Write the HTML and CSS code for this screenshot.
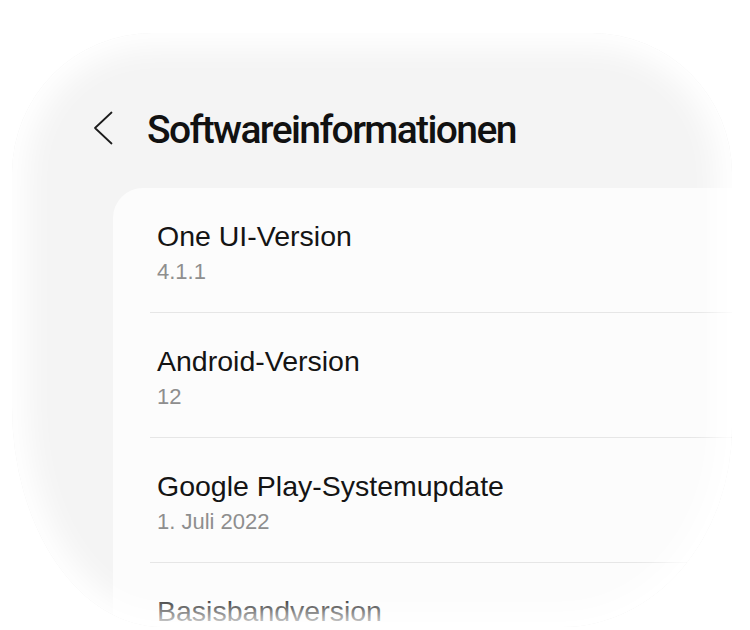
FILE: index.html
```html
<!DOCTYPE html>
<html lang="de">
<head>
<meta charset="utf-8">
<title>Softwareinformationen</title>
<link rel="stylesheet" href="styles.css">
</head>
<body>
<div class="screen">
  <header class="appbar">
    <svg class="back" width="20" height="34" viewBox="0 0 20 34" aria-hidden="true">
      <path d="M18.5 1.5 L2 17 L18.5 32.5" fill="none" stroke="#1c1c1c" stroke-width="1.8" stroke-linecap="round" stroke-linejoin="round"/>
    </svg>
    <h1 class="title">Softwareinformationen</h1>
  </header>
  <section class="card">
    <div class="row">
      <div class="row-title">One UI-Version</div>
      <div class="row-sub">4.1.1</div>
    </div>
    <div class="row">
      <div class="row-title">Android-Version</div>
      <div class="row-sub">12</div>
    </div>
    <div class="row">
      <div class="row-title">Google Play-Systemupdate</div>
      <div class="row-sub">1. Juli 2022</div>
    </div>
    <div class="row last">
      <div class="row-title">Basisbandversion</div>
      <div class="row-sub">&nbsp;</div>
    </div>
  </section>
</div>
</body>
</html>
```

FILE: styles.css
```css
html, body {
  margin: 0;
  padding: 0;
  background: #ffffff;
  width: 750px;
  height: 630px;
  overflow: hidden;
}

body {
  font-family: "Liberation Sans", Arial, sans-serif;
}

.screen {
  position: relative;
  margin: 33px 18px 0 12px;
  height: 594px;
  background: #f4f4f4;
  border-radius: 140px 140px 170px 150px / 140px 140px 200px 220px;
  overflow: hidden;
}

.screen::after {
  content: "";
  position: absolute;
  inset: 0;
  border-radius: inherit;
  box-shadow: inset 0 0 30px 15px #ffffff;
  pointer-events: none;
}

.appbar {
  display: flex;
  align-items: center;
  gap: 34px;
  padding: 75px 0 0 81px;
  height: 44px;
}

.back {
  flex: none;
  margin-bottom: 5px;
}

.title {
  margin: 0;
  font-family: Roboto, "Liberation Sans", sans-serif;
  font-size: 39px;
  line-height: 44px;
  font-weight: 500;
  letter-spacing: -1.6px;
  color: #111111;
}

.card {
  margin: 36px 0 0 101px;
  background: #fcfcfc;
  border-top-left-radius: 30px;
  padding-bottom: 40px;
}

.row {
  margin-left: 37px;
  padding: 32px 0 26px 7px;
  border-bottom: 1px solid #e6e6e6;
}

.row.last {
  border-bottom: none;
}

.row-title {
  font-size: 28.5px;
  line-height: 32px;
  color: #141414;
}

.row-sub {
  margin-top: 6px;
  font-size: 22px;
  line-height: 28px;
  color: #8e8e8e;
}
```
